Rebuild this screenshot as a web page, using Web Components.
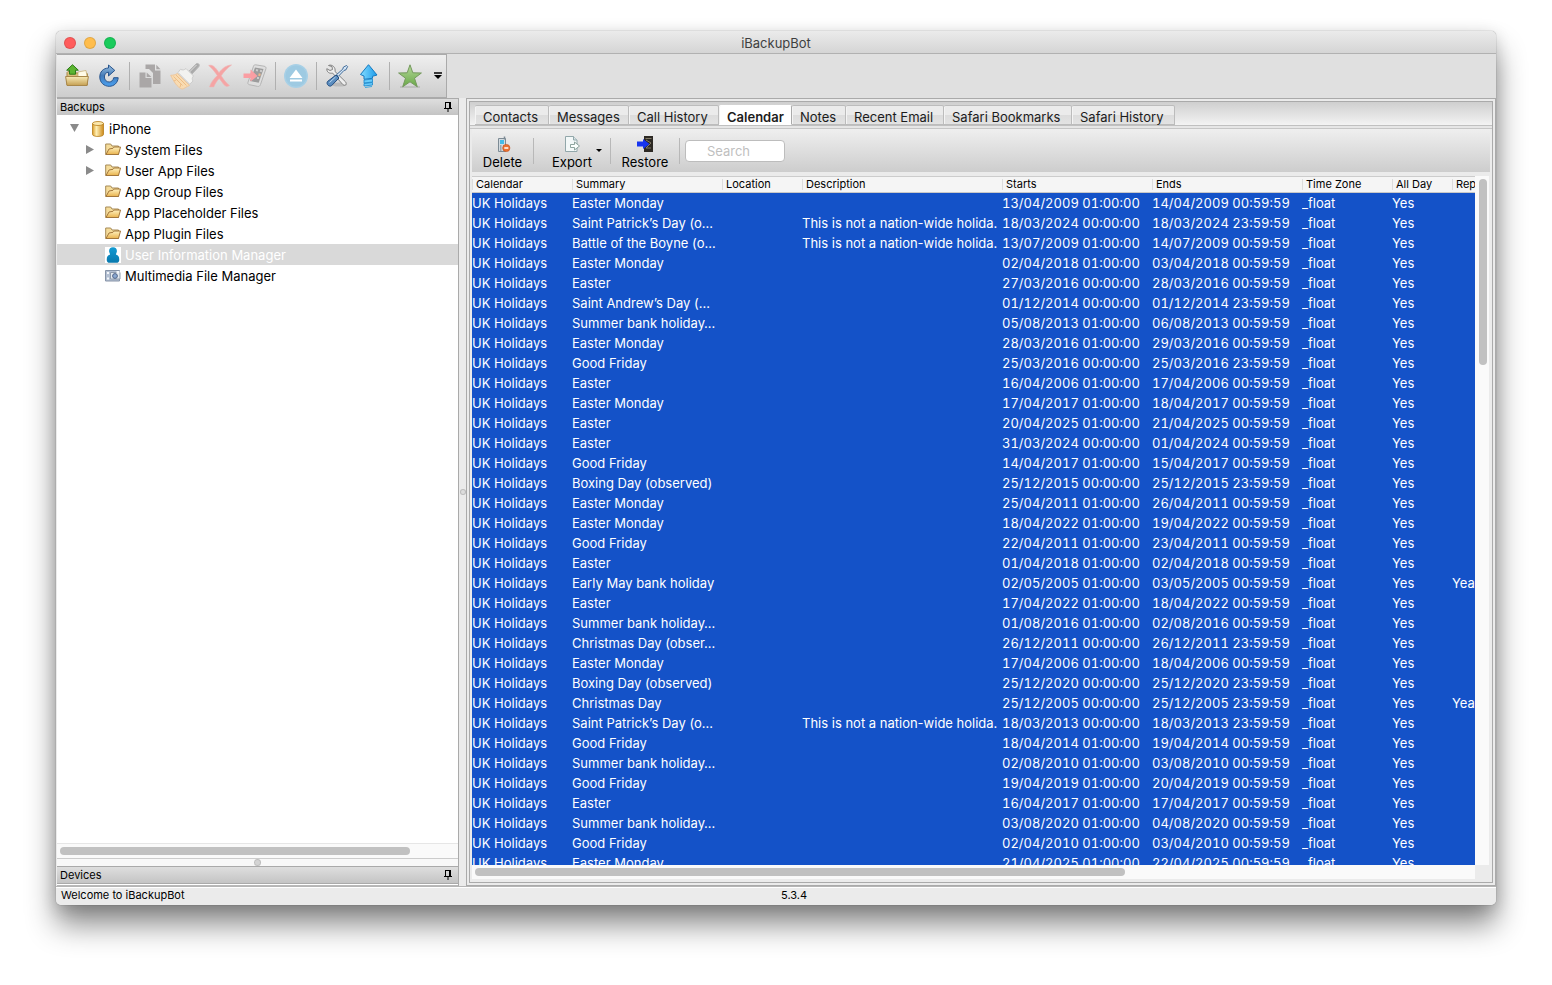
<!DOCTYPE html>
<html lang="en">
<head>
<meta charset="utf-8">
<title>iBackupBot</title>
<style>
  html { height: 100%; }
  body { margin: 0; min-height: 100%; background: #fff; font: 13px/20px Inter, "Liberation Sans", sans-serif; color: #000; }
</style>
</head>
<body>
<backup-app></backup-app>
<script>
const ICONS = {
  open: `<svg viewBox="0 0 24 24"><defs><linearGradient id="a" x2="0" y2="1"><stop stop-color="#f8ebb8"/><stop offset="1" stop-color="#c59f52"/></linearGradient></defs><path d="M2 21V8.500l1-1h7l1 1.500h10.500l1 1V21z" fill="#d9bd7a" stroke="#a98a4c"/><path d="M13 8l8-1.500 1 6H13z" fill="#fffbe8" stroke="#c4ab70" stroke-width=".7"/><path d="M.6 12.500h22.800L22 21.500H2z" fill="url(#a)" stroke="#a8874a"/><path d="M7.500.7l5.800 5.500h-2.800v4h-6v-4H1.700z" fill="#5cb531" stroke="#2d7a17"/></svg>`,
  refresh: `<svg viewBox="0 0 24 24"><defs><linearGradient id="a" x2="0" y2="1"><stop stop-color="#9cc0df"/><stop offset=".5" stop-color="#447bb8"/><stop offset="1" stop-color="#4aa0f0"/></linearGradient></defs><path d="M11.500 1v3C6 4.200 2.800 8 2.800 13c0 5.500 4.200 9.300 9.400 9.300 5 0 8.600-3.600 9-8.600h-4.500c-.5 2.600-2.200 4.300-4.500 4.300-2.800 0-4.800-2.100-4.800-5s1.600-4.700 4.100-4.800V12l6.300-5.600z" fill="url(#a)" stroke="#28558e"/></svg>`,
  copy: `<svg viewBox="0 0 24 24"><path d="M7.500 .500h9.500v6h5.500V20H15V9l-4-4H7.500z" fill="#aaa7a7"/><path d="M18.300.700l4.200 4.600h-4.200z" fill="#aaa7a7"/><path d="M1.500 8.500h6v5.500h6V23.500h-12z" fill="#aaa7a7"/><path d="M8.700 8.500l4.700 4.600H8.700z" fill="#aaa7a7"/></svg>`,
  brush: `<svg viewBox="0 0 30 28"><path d="M19 9l7-7c2-1.500 4.300.5 2.700 2.800L22 12z" fill="#aaa" stroke="#b6b6b6"/><path d="M19.500 10l7-7" stroke="#ddd"/><path d="M7.500 11.500l12 12c-3 1-5.500 3.400-7.500 3.600C7 25 4 20 .7 13.300c2.800 0 4.500-.5 6.800-1.800z" fill="#f8dbb2" stroke="#eec69a"/><path d="M3.500 14.500l9 9M6 13l10.500 10.500M4 19l2-1M10 25l1-3" stroke="#eebd85"/><path d="M8 10.500l2.500-3.200c2 1 3.800.8 5.500-.8L23.500 14c-1.500 1.500-1.600 3.300-.5 5l-3.300 3.200z" fill="#f2f2f0" stroke="#ccc"/></svg>`,
  remove: `<svg viewBox="0 0 24 24"><path d="M.7 1.500C4.500.3 7.200 3 11 8.700 14.500 4.300 18 1.300 23.500 1 19 4.200 15.700 8 13.200 11.800c2.500 4 5 7 8.300 9.800-2.300 1.500-4 .8-5.800-1.200l-4.500-6c-2.500 2.800-4.200 5.500-5.400 8.500H1.500c1.300-4.300 4.500-8.200 7.800-11.400C6.300 7 3.600 4.200.7 1.500z" fill="#f5a4a4" stroke="#efb4b4" stroke-width=".6"/></svg>`,
  phone: `<svg viewBox="0 0 24 24"><path d="M10.500 2.200c.3-1 1-1.500 2-1.400l8.500 1.400c1.500.3 2.300 1.100 2 2.300l-5.500 16c-.5 1.400-1.300 2.200-2.900 1.900l-8.300-1.700c-1.200-.3-1.700-1.200-1.300-2.500z" fill="#dedede" stroke="#b5b5b5"/><path d="M12 3.500l8.500 1.600-4.800 13.700L7 17z" fill="#9c9c9c"/><path d="M13 6l2 .4M17 6.800l2 .4M14 14h2" stroke="#ccc" stroke-width="2"/><path d="M15.500 10.500l2 .4" stroke="#efb78c" stroke-width="2.500"/><path d="M.5 9.500h7v-4l7 6.500-7 5.500v-3.500h-7z" fill="#fa9ea3"/></svg>`,
  eject: `<svg viewBox="0 0 24 24"><circle cx="12" cy="12" r="12" fill="#a8d0e6"/><circle cx="12" cy="12" r="10.500" fill="#9ecae2"/><path d="M12 5.500l6.500 8.500h-13zM6 15.500h12v2H6z" fill="#fff"/></svg>`,
  tools: `<svg viewBox="0 0 24 24"><ellipse cx="14" cy="20.500" rx="8" ry="2" fill="#bbb"/><path d="M3.500 1.500l3.500 1 .5 3-2.500 1-3.200-1.800C1.500 8 4.500 10 7.500 9l10.300 11.500c2.500 2 4.500-.4 2.700-2.700L10 7.500c1-4-3-7.600-6.500-6z" fill="#eee" stroke="#777" stroke-width=".9"/><path d="M11.500 10.700l6.300-5.600.6-2 3.200-1.600 1 1-1.600 3.300-2 .6-5.700 6z" fill="#d6e6f5" stroke="#315f91" stroke-width=".9"/><path d="M11 11l3 3-7.500 7.700c-2 1.500-5.700-1.200-4-4.200z" fill="#5b8dbf" stroke="#234d80"/><path d="M4.500 18.500l6-5.500" stroke="#b9d8f1"/></svg>`,
  up: `<svg viewBox="0 0 24 24"><defs><linearGradient id="a"><stop stop-color="#84dcff"/><stop offset="1" stop-color="#1b9bea"/></linearGradient></defs><path d="M11.500.7L20 11l-4.500 1.300v2l-8.500 1V12L3.500 10.500z" fill="url(#a)" stroke="#1378bf"/><path d="M7 16l8.500-1v3L7 19zM7 19.500l8.500-1v2.500L7 22z" fill="#6acdfb" stroke="#1686cd" stroke-width=".8"/><path d="M8 23.500l7-1" stroke="#3fa8e0"/></svg>`,
  star: `<svg viewBox="0 0 24 24"><defs><linearGradient id="a" x2="0" y2="1"><stop stop-color="#b5d99b"/><stop offset="1" stop-color="#69a846"/></linearGradient></defs><path d="M2 23h20" stroke="#aaa"/><path d="M12 .8l2.800 8 8.600.2-6.900 5.200 2.800 8.600L12 17.800l-7.300 5 2.800-8.600L.6 9l8.600-.2z" fill="url(#a)" stroke="#75995e"/></svg>`,
  overflow: `<svg viewBox="0 0 8 8"><path d="M0 1h8" stroke="#000" stroke-width="1.500"/><path d="M0 3h8L4 7z"/></svg>`,
  caret: `<svg viewBox="0 0 8 8"><path d="M1 2h6L4 5z"/></svg>`,
  pin: `<svg viewBox="0 0 8 12"><path d="M1.500 1.500h5v5.500M1.500 1v6" fill="none" stroke="#000"/><path d="M6 1v6" stroke="#000" stroke-width="2"/><path d="M0 7.500h8M4 7v4" stroke="#000"/></svg>`,
  drum: `<svg viewBox="0 0 16 16"><defs><linearGradient id="a"><stop stop-color="#d99a25"/><stop offset=".35" stop-color="#fff0b5"/><stop offset="1" stop-color="#cd8a1a"/></linearGradient></defs><path d="M2.500 2.500v11c0 2.600 11 2.600 11 0v-11z" fill="url(#a)" stroke="#b67d1a" stroke-width=".8"/><ellipse cx="8" cy="2.500" rx="5.500" ry="2" fill="#fbe7ab" stroke="#b67d1a" stroke-width=".8"/></svg>`,
  folder: `<svg viewBox="0 0 16 16"><defs><linearGradient id="a" x2="0" y2="1"><stop stop-color="#fff2bf"/><stop offset="1" stop-color="#e9b34d"/></linearGradient></defs><path d="M.7 12.500V2h5L7 4h6.500v8.500z" fill="#f5dc9a" stroke="#a68a57"/><path d="M1 12.500L4 7l4-.7L9.200 5h6.300l-2 7.500z" fill="url(#a)" stroke="#a3763a"/></svg>`,
  user: `<svg viewBox="0 0 16 16"><defs><linearGradient id="a" x2="0" y2="1"><stop stop-color="#129bd3"/><stop offset="1" stop-color="#0878ad"/></linearGradient></defs><path d="M0 0h16v16H0z" fill="#fff"/><path d="M8 .3c3.500 0 4.600 3 3.500 5.500-.4 1-.6 1.300-.3 2 2.200.6 3.300 2.200 3 5.700-.2 1.400-1.200 2.300-2.800 2.300H4.600c-1.600 0-2.600-.9-2.800-2.300-.3-3.500.8-5.100 3-5.700.3-.7.1-1-.3-2C3.400 3.300 4.500.3 8 .3z" fill="url(#a)"/></svg>`,
  media: `<svg viewBox="0 0 16 16"><path d="M.5 2.500h14v10.500H.5z" fill="#b4c0d2" stroke="#8794a8"/><path d="M2 4h2v2H2zM2 9.500h2v2H2z" fill="#f4f7fb"/><path d="M5.500 4.500h9.500v6.500H5.500z" fill="#e6ebf0" stroke="#8f9bac"/><circle cx="10" cy="8" r="2.400" fill="#8aa8d0" stroke="#50658a"/><path d="M11.500 3h3v2h-3z" fill="#f3f6fa"/></svg>`,
  del: `<svg viewBox="0 0 16 16"><path d="M3.500 2.500h7v13h-7z" fill="#d3dbe0" stroke="#7c8a94"/><path d="M9.500.5v3" stroke="#7c8a94" stroke-width="1.500"/><path d="M5 4h4v4H5z" fill="#44bce8"/><path d="M5 10h1.500M8 10h1M5 12h1.500M5 14h1.500" stroke="#66737d"/><circle cx="11.300" cy="12" r="3.600" fill="#ec7230" stroke="#c8511b" stroke-width=".7"/><path d="M9.300 12h4" stroke="#fff" stroke-width="1.500"/></svg>`,
  exp: `<svg viewBox="0 0 16 16"><path d="M1.500.5h8l3.500 3.500v11.500H1.500z" fill="#f3f8f8" stroke="#92a7aa"/><path d="M9.500.5V4H13" fill="#d8e4e5" stroke="#92a7aa"/><path d="M6.500 8.500h4V6l5 4-5 4v-2.500h-4z" fill="#fbfffd" stroke="#819b94" stroke-width=".9"/></svg>`,
  restore: `<svg viewBox="0 0 16 16"><path d="M7 0h9v16H7z" fill="#2d2924"/><path d="M8.500 2.500h6M9 4l5 3-5 5h5" stroke="#827b68" fill="none"/><path d="M0 5.500h6V3l6.500 5L6 13v-2.500H0z" fill="#1634f0"/></svg>`
};

class UiIcon extends HTMLElement {
  connectedCallback() {
    if (this.shadowRoot) return;
    this.attachShadow({ mode: 'open' }).innerHTML =
      `<style>:host{display:inline-block;flex:none;width:var(--icon,16px);height:var(--icon-h,var(--icon,16px))}svg{display:block;width:100%;height:100%}</style>${ICONS[this.getAttribute('name')].replace('<svg', '<svg aria-hidden="true"')}`;
  }
}
customElements.define('ui-icon', UiIcon);

const define = (tag, html) => customElements.define(tag, class extends HTMLElement {
  connectedCallback() {
    if (this.shadowRoot) return;
    const t = document.createElement('template');
    t.innerHTML = html;
    this.attachShadow({ mode: 'open' }).append(t.content.cloneNode(true));
  }
});

const BTN = 'button{font:inherit;color:inherit;border:0;background:none;padding:0;margin:0}';

define('title-bar', `<style>
  :host{display:grid;grid-template-columns:1fr auto 1fr;align-items:center;height:22px;border-bottom:1px solid #b1b1b1;background:linear-gradient(#ebebeb,#d5d5d5);color:#3f3f3f;border-radius:5px 5px 0 0}
  ${BTN}
  .lights{display:flex;gap:8px;padding:2px 0 0 8px}
  button{width:12px;height:12px;border-radius:50%;background:var(--c);box-shadow:inset 0 0 0 1px rgba(0,0,0,.12)}
  h1{margin:0;font:inherit;padding-top:2px}
</style><div class="lights"><button aria-label="Close" style="--c:#ff5c5c"></button><button aria-label="Minimize" style="--c:#ffbd4c"></button><button aria-label="Zoom" style="--c:#19cb5b"></button></div><h1><slot></slot></h1>`);

define('main-toolbar', `<style>
  :host{display:flex;background:#e0e0e0}
  .bar{display:flex;align-items:center;height:42px;padding-left:4px;border:1px solid #aaa;border-left:0;background:linear-gradient(#efefef,#cdcdcd);--icon:24px}
  ${BTN}
  button{width:32px;height:32px;display:grid;place-items:center}
  .group{display:flex;gap:3px}
  .brush{--icon:30px;--icon-h:28px}
  i{width:1px;height:28px;margin:0 4px;background:#b0b0b0}
  .more{--icon:8px;width:20px;justify-content:end;padding-right:4px}
</style><div class="bar" role="toolbar">
<button aria-label="Open"><ui-icon name="open"></ui-icon></button><button aria-label="Refresh"><ui-icon name="refresh"></ui-icon></button><i></i>
<div class="group"><button disabled aria-label="Copy"><ui-icon name="copy"></ui-icon></button><button disabled aria-label="Clean" class="brush"><ui-icon name="brush"></ui-icon></button><button disabled aria-label="Delete"><ui-icon name="remove"></ui-icon></button><button disabled aria-label="Import"><ui-icon name="phone"></ui-icon></button></div><i></i>
<button aria-label="Eject"><ui-icon name="eject"></ui-icon></button><i></i>
<button aria-label="Settings"><ui-icon name="tools"></ui-icon></button><button aria-label="Update"><ui-icon name="up"></ui-icon></button><i></i>
<button aria-label="Favorite"><ui-icon name="star"></ui-icon></button><button class="more" aria-label="More"><ui-icon name="overflow"></ui-icon></button></div>`);

define('pane-header', `<style>
  :host{display:flex;justify-content:space-between;align-items:center;height:16px;padding:0 6px 0 3px;border-top:1px solid #aaa;background:linear-gradient(#dedede,#c4c4c4);font-size:11px;line-height:16px}
  ${BTN}
  h2{margin:0;font:inherit}
  button{--icon:8px;--icon-h:12px;display:flex}
</style><h2><slot></slot></h2><button aria-label="Pin"><ui-icon name="pin"></ui-icon></button>`);

define('tree-item', `<style>
  :host{display:flex;align-items:center;height:21px;padding-left:28px;gap:4px}
  :host([root]){padding-left:13px}
  :host([selected]){background:#d9d9d9;color:#fff}
  span{width:16px;height:12px;flex:none;display:flex;align-items:center}
  :host([root]) span{width:17px}
  :host([root]){gap:3px}
  span svg{display:none;width:9px;height:9px;fill:#8a8a8a}
  :host([expand=closed]) .c,:host([expand=open]) .o{display:block}
</style><span><svg class="c" viewBox="0 0 9 9"><path d="M1 0l8 4.500L1 9z"/></svg><svg class="o" viewBox="0 0 9 9"><path d="M0 0h9L4.500 8z"/></svg></span><slot name="icon"></slot><slot></slot>`);

const tree = [['iPhone','drum','root expand="open"'],['System Files','folder','expand="closed"'],['User App Files','folder','expand="closed"'],['App Group Files','folder',''],['App Placeholder Files','folder',''],['App Plugin Files','folder',''],['User Information Manager','user','selected'],['Multimedia File Manager','media','']]
  .map(([t,i,a]) => `<tree-item role="treeitem" ${a}><ui-icon slot="icon" name="${i}"></ui-icon>${t}</tree-item>`).join('');

define('side-bar', `<style>
  :host{display:flex;flex-direction:column;min-height:0;width:401px;border-right:1px solid #aaa}
  .tree{flex:1;background:#fff;padding-top:3px}
  .scroll{height:14px;background:#fafafa;border-top:1px solid #e6e6e6;border-bottom:1px solid #ccc;display:flex;align-items:center;padding-left:3px}
  .thumb{width:350px;height:8px;border-radius:4px;background:#c1c1c1}
  .split{height:7px;background:#f8f8f8;display:grid;place-items:center}
  .split b{width:5px;height:5px;border-radius:50%;background:#d4d4d4;box-shadow:0 0 0 1px #bdbdbd}
  .end{height:1px;background:#fff;border-top:1px solid #aaa;border-bottom:1px solid #b8b8b8}
</style><pane-header>Backups</pane-header><div class="tree" role="tree">${tree}</div><div class="scroll"><div class="thumb"></div></div><div class="split"><b></b></div><pane-header>Devices</pane-header><div class="end"></div>`);

define('tab-strip', `<style>
  :host{display:flex;align-items:flex-start;height:20px;padding:3px 0 0 5px;border-bottom:1px solid #c0c0c0;background:linear-gradient(#cfcfcf,#f3f3f3)}
  ${BTN}
  button{box-sizing:border-box;width:var(--w);height:20px;padding-left:8px;text-align:left;white-space:nowrap;border:1px solid #bcbcbc;border-width:1px 1px 1px 0;background:linear-gradient(#ebebeb 50%,#dcdcdc 50%,#e3e3e3);color:#1c1c1c;line-height:22px;border-radius:2px 2px 0 0;box-shadow:inset 1px 0 #f4f4f4}
  button[aria-selected=true]{background:#fff;font-weight:600;border-color:#fff #aaa #fff #fff}
</style>${[['Contacts',74],['Messages',80],['Call History',90],['Calendar',73],['Notes',54],['Recent Email',98],['Safari Bookmarks',128],['Safari History',103]].map(([t,w]) => `<button role="tab" aria-selected="${t==='Calendar'}" style="--w:${w}px">${t}</button>`).join('')}`);

define('action-bar', `<style>
  :host{display:flex;align-items:center;height:43px;margin:0 2px;background:linear-gradient(#efefef,#cdcdcd)}
  ${BTN}
  button{display:flex;flex-direction:column;align-items:center;gap:1px;line-height:18px;padding-top:6px}
  .del{width:61px}.exp{width:76px;position:relative}.res{width:68px}
  .exp .caret{--icon:8px;position:absolute;right:7px;top:17px}
  i{width:1px;height:26px;background:#b8b8b8}
  input{box-sizing:border-box;width:100px;height:22px;margin:0 0 0 5px;padding:0;border:1px solid #bdbdbd;border-radius:4px;background:#fff;font:inherit;text-align:center}
  input::placeholder{color:#bfbfbf;opacity:1}
</style><button class="del"><ui-icon name="del"></ui-icon>Delete</button><i></i><button class="exp"><ui-icon name="exp"></ui-icon>Export<ui-icon class="caret" name="caret"></ui-icon></button><i></i><button class="res"><ui-icon name="restore"></ui-icon>Restore</button><i></i><input type="search" aria-label="Search" placeholder="Search">`);

const M='Easter Monday', E='Easter', G='Good Friday', S='Summer bank holiday…', P='Saint Patrick’s Day (o…';
const ROWS = [
  [M,'13/04/2009 01:00:00','14/04/2009 00:59:59'],
  [P,'18/03/2024 00:00:00','18/03/2024 23:59:59',1],
  ['Battle of the Boyne (o…','13/07/2009 01:00:00','14/07/2009 00:59:59',1],
  [M,'02/04/2018 01:00:00','03/04/2018 00:59:59'],
  [E,'27/03/2016 00:00:00','28/03/2016 00:59:59'],
  ['Saint Andrew’s Day (…','01/12/2014 00:00:00','01/12/2014 23:59:59'],
  [S,'05/08/2013 01:00:00','06/08/2013 00:59:59'],
  [M,'28/03/2016 01:00:00','29/03/2016 00:59:59'],
  [G,'25/03/2016 00:00:00','25/03/2016 23:59:59'],
  [E,'16/04/2006 01:00:00','17/04/2006 00:59:59'],
  [M,'17/04/2017 01:00:00','18/04/2017 00:59:59'],
  [E,'20/04/2025 01:00:00','21/04/2025 00:59:59'],
  [E,'31/03/2024 00:00:00','01/04/2024 00:59:59'],
  [G,'14/04/2017 01:00:00','15/04/2017 00:59:59'],
  ['Boxing Day (observed)','25/12/2015 00:00:00','25/12/2015 23:59:59'],
  [M,'25/04/2011 01:00:00','26/04/2011 00:59:59'],
  [M,'18/04/2022 01:00:00','19/04/2022 00:59:59'],
  [G,'22/04/2011 01:00:00','23/04/2011 00:59:59'],
  [E,'01/04/2018 01:00:00','02/04/2018 00:59:59'],
  ['Early May bank holiday','02/05/2005 01:00:00','03/05/2005 00:59:59',0,1],
  [E,'17/04/2022 01:00:00','18/04/2022 00:59:59'],
  [S,'01/08/2016 01:00:00','02/08/2016 00:59:59'],
  ['Christmas Day (obser…','26/12/2011 00:00:00','26/12/2011 23:59:59'],
  [M,'17/04/2006 01:00:00','18/04/2006 00:59:59'],
  ['Boxing Day (observed)','25/12/2020 00:00:00','25/12/2020 23:59:59'],
  ['Christmas Day','25/12/2005 00:00:00','25/12/2005 23:59:59',0,1],
  [P,'18/03/2013 00:00:00','18/03/2013 23:59:59',1],
  [G,'18/04/2014 01:00:00','19/04/2014 00:59:59'],
  [S,'02/08/2010 01:00:00','03/08/2010 00:59:59'],
  [G,'19/04/2019 01:00:00','20/04/2019 00:59:59'],
  [E,'16/04/2017 01:00:00','17/04/2017 00:59:59'],
  [S,'03/08/2020 01:00:00','04/08/2020 00:59:59'],
  [G,'02/04/2010 01:00:00','03/04/2010 00:59:59'],
  [M,'21/04/2025 01:00:00','22/04/2025 00:59:59']
];
const COLS = [['Calendar',100],['Summary',150],['Location',80],['Description',200],['Starts',150],['Ends',150],['Time Zone',90],['All Day',60],['Rep',100]];

define('event-table', `<style>
  :host{display:grid;grid-template-columns:minmax(0,1fr) 14px;grid-template-rows:minmax(0,1fr) 14px;flex:1;min-height:0;margin:4px 3px 3px 2px}
  .view{overflow:hidden;background:#1452c8;min-height:0;contain:size}
  table{table-layout:fixed;width:1080px;border-collapse:separate;border-spacing:0}
  th{height:17px;padding:0 0 0 4px;border-bottom:1px solid #c8c8c8;border-top:1px solid #ccc;text-align:left;font-weight:400;font-size:11px;line-height:15px;background:linear-gradient(90deg,#dcdcdc 1px,transparent 1px) 0 2px/100% 11px no-repeat #f5f5f5}
  th,td{box-sizing:border-box;white-space:nowrap;overflow:hidden}
  td{height:20px;padding:0;line-height:20px;color:#fff}
  .n{font-variant-numeric:tabular-nums}
  .v{background:#fafafa;padding:3px 2px 0 4px}
  .v div{height:186px;width:8px;border-radius:4px;background:#c1c1c1}
  .h{background:#fafafa;padding:3px 0 0 3px}
  .h div{width:65%;height:8px;border-radius:4px;background:#c1c1c1}
</style><div class="view"><table><colgroup>${COLS.map(c=>`<col style="width:${c[1]}px">`).join('')}</colgroup><thead><tr>${COLS.map(c=>`<th scope="col">${c[0]}</th>`).join('')}</tr></thead><tbody>${ROWS.map(([s,a,b,d,r])=>`<tr><td>UK Holidays</td><td>${s}</td><td></td><td>${d?'This is not a nation-wide holida.':''}</td><td class="n">${a}</td><td class="n">${b}</td><td>_float</td><td>Yes</td><td>${r?'Year':''}</td></tr>`).join('')}</tbody></table></div><div class="v"><div></div></div><div class="h"><div></div></div>`);

define('content-pane', `<style>
  :host{display:flex;flex:1;min-width:0;min-height:0;padding:2px;border:1px solid #aaa;background:#ebebeb;box-sizing:border-box}
  .in{flex:1;min-width:0;display:flex;flex-direction:column;border:1px solid #aaa}
  .rule{height:2px;border-bottom:1px solid #c6c6c6;background:#e6e6e6}
</style><div class="in"><tab-strip role="tablist"></tab-strip><div class="rule"></div><action-bar></action-bar><event-table></event-table></div>`);

define('status-bar', `<style>
  :host{display:grid;grid-template-columns:1fr 1fr;height:18px;border-top:1px solid #b5b5b5;background:#ebebeb;font-size:11px;line-height:17px;box-shadow:inset 0 1px #fff;border-radius:0 0 5px 5px}
  slot{display:block}
  slot[name]{padding-left:5px}
  ::slotted(*){display:block}
</style><div><slot name="message"></slot></div><div><slot name="version"></slot></div>`);

define('backup-app', `<style>
  :host{display:flex;box-sizing:border-box;min-height:100vh;padding:31px 56px 80px}
  .win{flex:1;min-width:0;display:flex;flex-direction:column;background:#ebebeb;border-radius:5px;box-shadow:0 0 1px rgba(0,0,0,.6),0 20px 30px rgba(0,0,0,.45),0 4px 16px rgba(0,0,0,.16)}
  .body{flex:1;display:flex;min-height:0;padding-left:1px}
  .grip{width:7px;display:grid;place-items:center}
  .grip b{width:4px;height:4px;border-radius:50%;background:#ddd;box-shadow:0 0 0 1px #bbb}
  main-toolbar{padding-left:1px}
</style><div class="win"><title-bar>iBackupBot</title-bar><main-toolbar></main-toolbar><div class="body"><side-bar></side-bar><div class="grip"><b></b></div><content-pane></content-pane></div><status-bar><span slot="message">Welcome to iBackupBot</span><span slot="version">5.3.4</span></status-bar></div>`);
</script>
</body>
</html>
